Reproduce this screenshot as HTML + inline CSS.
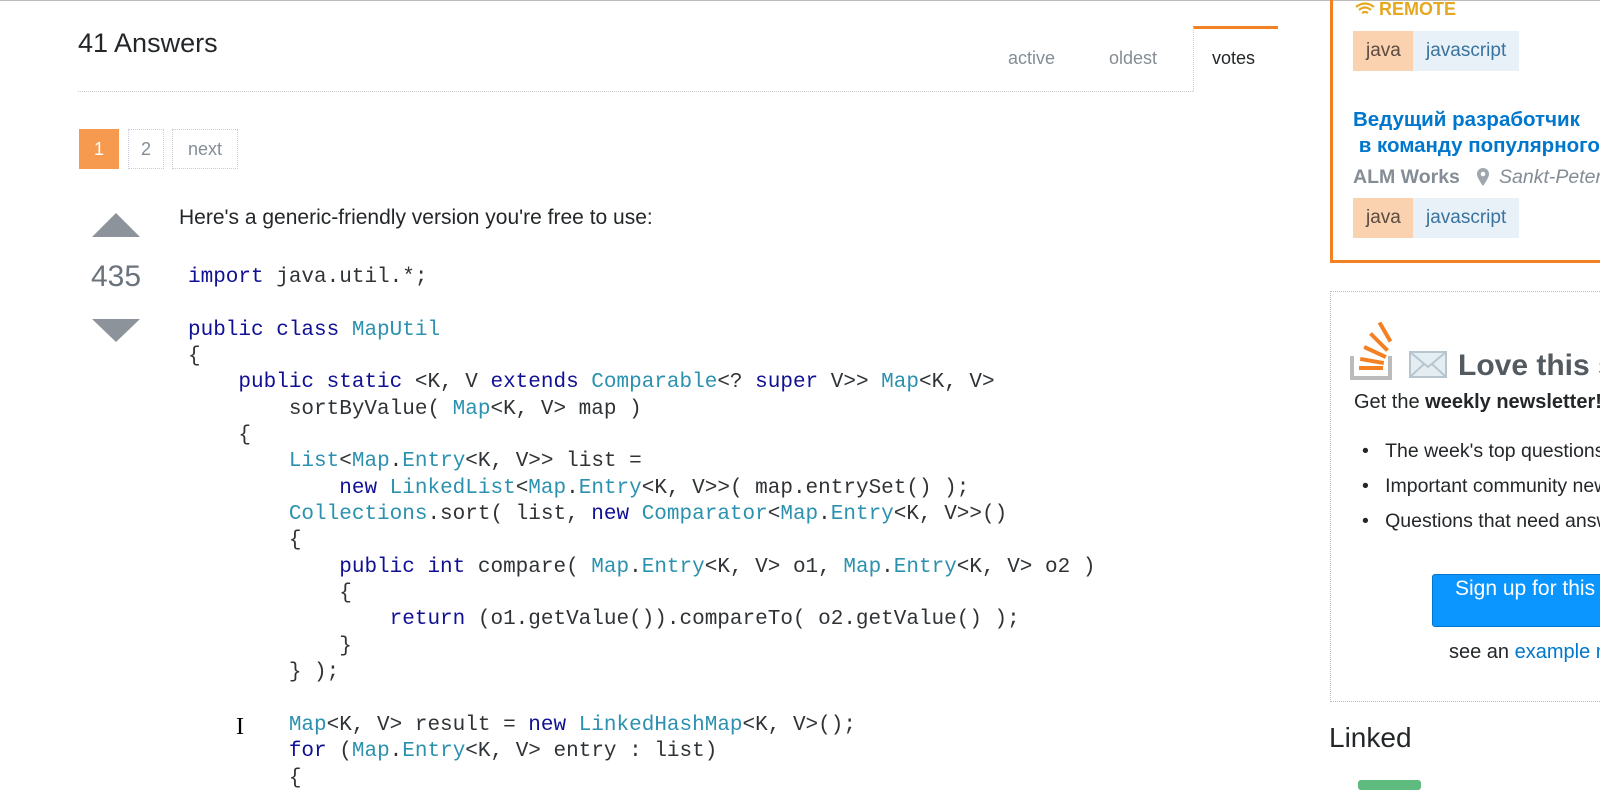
<!DOCTYPE html>
<html><head><meta charset="utf-8"><style>
html,body{margin:0;width:1600px;height:800px;overflow:hidden}
body{background:#fff;font-family:"Liberation Sans",sans-serif;color:#242729}
#w{position:relative;width:1600px;height:800px;overflow:hidden}
.a{position:absolute}
.k{color:#101094}.t{color:#2b91af}
pre{margin:0;font-family:"Liberation Mono",monospace;font-size:21px;line-height:26.35px;color:#303336}
.tag{position:absolute;height:40px;line-height:40px;font-size:19px;padding:0 13px}
.j{background:#fbd2b0;color:#5b4a3f}.js{background:#e8f0f8;color:#39739d}
</style></head><body><div id="w">
<div class="a" style="left:0;top:0;width:1600px;height:1px;background:#bbb"></div>
<div class="a" style="left:78px;top:28px;font-size:27px;color:#242729">41 Answers</div>
<div class="a" style="left:1008px;top:48px;font-size:18px;color:#848d95">active</div>
<div class="a" style="left:1109px;top:48px;font-size:18px;color:#848d95">oldest</div>
<div class="a" style="left:1193px;top:26px;width:85px;height:65px;border-top:3px solid #f48024;border-left:1px dotted #ccc;box-sizing:border-box"></div>
<div class="a" style="left:1212px;top:48px;font-size:18px;color:#242729">votes</div>
<div class="a" style="left:78px;top:91px;width:1115px;border-top:1px dotted #ccc"></div>
<div class="a" style="left:79px;top:129px;width:40px;height:40px;background:#f69a50;color:#fff;font-size:18px;text-align:center;line-height:40px">1</div>
<div class="a" style="left:128px;top:129px;width:36px;height:40px;border:1px dotted #ccd;box-sizing:border-box;color:#848d95;font-size:18px;text-align:center;line-height:38px">2</div>
<div class="a" style="left:172px;top:129px;width:66px;height:40px;border:1px dotted #ccc;box-sizing:border-box;color:#848d95;font-size:18px;text-align:center;line-height:38px">next</div>
<svg class="a" style="left:92px;top:213px" width="50" height="130"><polygon points="0,24 48,24 24,0" fill="#8c939a"/><polygon points="0,106 48,106 24,129" fill="#8c939a"/></svg>
<div class="a" style="left:78px;top:260px;width:76px;text-align:center;font-size:30px;color:#6a737c">435</div>
<div class="a" style="left:179px;top:206px;font-size:21px;color:#242729">Here's a generic-friendly version you're free to use:</div>
<pre class="a" style="left:188px;top:265px"><span class="k">import</span> java.util.*;

<span class="k">public class</span> <span class="t">MapUtil</span>
{
    <span class="k">public static</span> &lt;K, V <span class="k">extends</span> <span class="t">Comparable</span>&lt;? <span class="k">super</span> V&gt;&gt; <span class="t">Map</span>&lt;K, V&gt;
        sortByValue( <span class="t">Map</span>&lt;K, V&gt; map )
    {
        <span class="t">List</span>&lt;<span class="t">Map</span>.<span class="t">Entry</span>&lt;K, V&gt;&gt; list =
            <span class="k">new</span> <span class="t">LinkedList</span>&lt;<span class="t">Map</span>.<span class="t">Entry</span>&lt;K, V&gt;&gt;( map.entrySet() );
        <span class="t">Collections</span>.sort( list, <span class="k">new</span> <span class="t">Comparator</span>&lt;<span class="t">Map</span>.<span class="t">Entry</span>&lt;K, V&gt;&gt;()
        {
            <span class="k">public int</span> compare( <span class="t">Map</span>.<span class="t">Entry</span>&lt;K, V&gt; o1, <span class="t">Map</span>.<span class="t">Entry</span>&lt;K, V&gt; o2 )
            {
                <span class="k">return</span> (o1.getValue()).compareTo( o2.getValue() );
            }
        } );

        <span class="t">Map</span>&lt;K, V&gt; result = <span class="k">new</span> <span class="t">LinkedHashMap</span>&lt;K, V&gt;();
        <span class="k">for</span> (<span class="t">Map</span>.<span class="t">Entry</span>&lt;K, V&gt; entry : list)
        {</pre>
<div class="a" style="left:236px;top:714px;font-size:24px;color:#000;font-family:'Liberation Serif',serif">I</div>
<!-- sidebar ad -->
<div class="a" style="left:1330px;top:0;width:290px;height:263px;border:3px solid #f48024;border-top:none;box-sizing:border-box"></div>
<svg class="a" style="left:1354px;top:1px" width="22" height="17"><path d="M2,6 Q11,-1 20,6 M5,9 Q11,4 17,9 M8,12 Q11,10 14,12" stroke="#e5a823" stroke-width="2.2" fill="none"/></svg>
<div class="a" style="left:1379px;top:-1px;font-size:18px;font-weight:bold;color:#e5a823">REMOTE</div>
<div class="tag j" style="left:1353px;top:31px">java</div>
<div class="tag js" style="left:1413px;top:31px">javascript</div>
<div class="a" style="left:1353px;top:107px;font-size:20.5px;font-weight:bold;color:#0077cc;line-height:26px;white-space:nowrap">Ведущий разработчик<br>&nbsp;в команду популярного</div>
<div class="a" style="left:1353px;top:166px;font-size:19.5px;font-weight:bold;color:#848d95">ALM Works</div>
<svg class="a" style="left:1477px;top:168px" width="12" height="18"><path d="M6,0 A6,6 0 0 1 12,6 C12,10 6,18 6,18 C6,18 0,10 0,6 A6,6 0 0 1 6,0Z" fill="#9fa6ad"/><circle cx="6" cy="6" r="2.3" fill="#fff"/></svg>
<div class="a" style="left:1499px;top:166px;font-size:19.5px;font-style:italic;color:#848d95;white-space:nowrap">Sankt-Petersburg</div>
<div class="tag j" style="left:1353px;top:198px">java</div>
<div class="tag js" style="left:1413px;top:198px">javascript</div>
<!-- newsletter -->
<div class="a" style="left:1330px;top:291px;width:290px;height:411px;border:1px dotted #bbb;box-sizing:border-box"></div>
<svg class="a" style="left:1350px;top:322px" width="100" height="60"><path d="M2,34 V56 H40 V34" stroke="#bcbbbb" stroke-width="4" fill="none"/><rect x="9" y="44" width="24" height="4" fill="#f48024"/><rect x="10" y="37" width="24" height="4" fill="#f48024" transform="rotate(10 22 39)"/><rect x="13" y="28" width="24" height="4" fill="#f48024" transform="rotate(25 25 30)"/><rect x="17" y="18" width="24" height="4" fill="#f48024" transform="rotate(45 29 20)"/><rect x="24" y="8" width="22" height="4" fill="#f48024" transform="rotate(60 35 10)"/><rect x="60" y="30" width="36" height="25" fill="#e4eef2" stroke="#b7c6ce" stroke-width="2"/><path d="M60,30 L78,45 L96,30 M60,55 L74,42 M96,55 L82,42" stroke="#b7c6ce" stroke-width="2" fill="none"/></svg>
<div class="a" style="left:1458px;top:349px;font-size:30px;font-weight:bold;color:#535a60;white-space:nowrap">Love this site?</div>
<div class="a" style="left:1354px;top:391px;font-size:20px;white-space:nowrap">Get the <b>weekly newsletter!</b></div>
<div class="a" style="left:1362px;top:434px;font-size:19.5px;line-height:35px;white-space:nowrap">•&nbsp;&nbsp;&nbsp;The week's top questions<br>•&nbsp;&nbsp;&nbsp;Important community news<br>•&nbsp;&nbsp;&nbsp;Questions that need answers</div>
<div class="a" style="left:1432px;top:574px;width:220px;height:53px;background:#0a95ff;border-radius:3px;border:1px solid #0077cc;box-sizing:border-box"></div>
<div class="a" style="left:1455px;top:576px;font-size:21px;line-height:26px;color:#fff;white-space:nowrap">Sign up for this newsletter</div>
<div class="a" style="left:1449px;top:641px;font-size:20px;white-space:nowrap">see an <span style="color:#0077cc">example newsletter</span></div>
<div class="a" style="left:1329px;top:722px;font-size:28px;color:#242729">Linked</div>
<div class="a" style="left:1358px;top:780px;width:63px;height:10px;background:#5eba7d;border-radius:3px"></div>
</div></body></html>
